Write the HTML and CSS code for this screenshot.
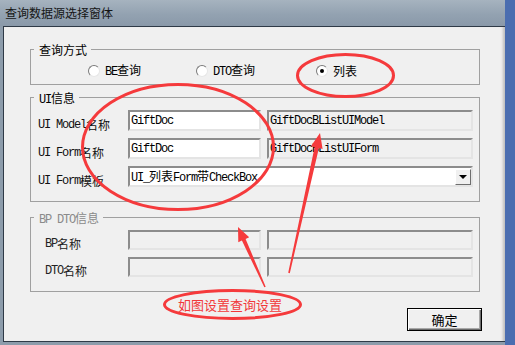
FILE: index.html
```html
<!DOCTYPE html>
<html lang="zh">
<head>
<meta charset="utf-8">
<title>查询数据源选择窗体</title>
<link rel="stylesheet" href="styles.css">
</head>
<body>
<div class="screen">
  <div class="window">
    <div class="titlebar">查询数据源选择窗体</div>
    <div class="frame">
      <div class="panel">
        <fieldset class="group g1">
          <legend>查询方式</legend>
          <div class="radios">
            <label class="radio r1"><span class="dot"></span><span><span class="m">BE</span>查询</span></label>
            <label class="radio r2"><span class="dot"></span><span><span class="m">DTO</span>查询</span></label>
            <label class="radio"><span class="dot on"></span><span>列表</span></label>
          </div>
        </fieldset>

        <fieldset class="group g2">
          <legend><span class="m">UI</span>信息</legend>
          <div class="grid g2grid">
            <div class="lbl"><span class="m">UI Model</span>名称</div>
            <div class="box"><span class="m">GiftDoc</span></div>
            <div class="box ro"><span class="m">GiftDocBListUIModel</span></div>

            <div class="lbl"><span class="m">UI Form</span>名称</div>
            <div class="box"><span class="m">GiftDoc</span></div>
            <div class="box ro"><span class="m">GiftDocBListUIForm</span></div>

            <div class="lbl"><span class="m">UI Form</span>模板</div>
            <div class="box combo"><span><span class="m">UI_</span>列表<span class="m">Form</span>带<span class="m">CheckBox</span></span><span class="drop"><span class="tri"></span></span></div>
          </div>
        </fieldset>

        <fieldset class="group g3">
          <legend class="dim"><span class="m">BP DTO</span>信息</legend>
          <div class="grid g3grid">
            <div class="lbl"><span class="m">BP</span>名称</div>
            <div class="box ro"></div>
            <div class="box ro"></div>

            <div class="lbl"><span class="m">DTO</span>名称</div>
            <div class="box ro"></div>
            <div class="box ro"></div>
          </div>
        </fieldset>

        <div class="actions">
          <button class="btn" type="button">确定</button>
        </div>
      </div>
    </div>
  </div>
  <div class="desk"></div>
</div>

<svg class="marks" width="515" height="345" viewBox="0 0 515 345">
  <g fill="none" stroke="#f53a3c" stroke-width="3">
    <ellipse cx="345.5" cy="75.5" rx="48" ry="21"/>
    <ellipse cx="178" cy="147" rx="95.5" ry="62.5"/>
    <ellipse cx="232.5" cy="304.5" rx="68" ry="14"/>
  </g>
  <g fill="#f53a3c">
    <polygon points="288.2,272.8 314.6,147.2 310.9,146.3 320,133 322.6,148.9 318.9,148.1 289.8,273.2"/>
    <polygon points="264.3,287.3 241.9,240.6 238.3,242.2 238,227 249.2,237.3 245.6,238.9 265.7,286.7"/>
  </g>
</svg>
<div class="note">如图设置查询设置</div>
</body>
</html>
```

FILE: styles.css
```css
* { box-sizing: border-box; }

body {
  margin: 0;
  width: 515px;
  height: 345px;
  overflow: hidden;
  position: relative;
  font-family: "Noto Sans CJK SC", sans-serif;
  font-size: 12px;
  color: #000;
}

.m {
  font-family: "Liberation Mono", monospace;
  font-size: 12px;
  letter-spacing: -1.2px;
}

.screen {
  display: flex;
  height: 345px;
}

.window {
  width: 505px;
  flex: none;
  display: flex;
  flex-direction: column;
  background: #8d9cab;
}

.desk {
  flex: 1;
  background: #4a6db0;
}

.titlebar {
  height: 26px;
  display: flex;
  align-items: center;
  padding-left: 5px;
  line-height: 14px;
  color: #151515;
  background: linear-gradient(180deg, #a6b3bf 0%, #93a2b1 55%, #8a99a9 100%);
}

.frame {
  flex: 1;
  display: flex;
  padding: 0 0 3px 3px;
}

.panel {
  flex: 1;
  min-width: 0;
  display: flex;
  flex-direction: column;
  background: #f0f0f0;
  border: 1px solid #2f3a47;
  border-right: none;
  box-shadow: inset -4px 0 3px -2px #bcbcbc;
  padding: 0 23px 0 26px;
}

.group {
  margin: 0 2px 0 0;
  min-width: 0;
  border: 1px solid #a0a0a0;
  padding: 0 6px 0 3px;
}

.group legend {
  padding: 0 4px 0 5px;
  height: 13px;
  line-height: 13px;
  font-size: 12px;
}

.group legend.dim { color: #8a8a8a; }

.g1 { margin-top: 16px; padding-top: 8px; padding-bottom: 6px; }
.g2 { margin-top: 6px; padding-top: 6px; padding-bottom: 14px; }
.g3 { margin-top: 9px; padding-top: 6px; padding-bottom: 14px; }

.radios {
  display: flex;
  height: 14px;
  align-items: center;
  padding-left: 54px;
}

.radio {
  display: flex;
  align-items: center;
  gap: 5px;
  line-height: 12px;
}
.r1 { width: 108px; }
.r2 { width: 120px; }

.dot {
  width: 12px;
  height: 12px;
  border-radius: 50%;
  background: #fff;
  border: 1px solid;
  border-color: #7a7a7a #e6e6e6 #e6e6e6 #7a7a7a;
  display: flex;
  align-items: center;
  justify-content: center;
}
.dot.on::after {
  content: "";
  width: 4px;
  height: 4px;
  border-radius: 50%;
  background: #000;
}

.grid {
  display: grid;
  grid-template-columns: 84px 133px 206px;
  column-gap: 6px;
  margin-left: 4px;
}
.g2grid { grid-auto-rows: 21px; row-gap: 7px; }
.g3grid { grid-auto-rows: 20px; row-gap: 7px; }

.lbl {
  display: flex;
  align-items: flex-end;
  line-height: 12px;
  white-space: nowrap;
  color: #111;
}
.g3grid .lbl { padding-left: 7px; color: #222; }

.box {
  display: flex;
  align-items: center;
  padding-left: 1px;
  background: #fff;
  border: 2px solid;
  border-color: #8c8c8c #e4e4e4 #e4e4e4 #8c8c8c;
  line-height: 12px;
  white-space: nowrap;
  overflow: hidden;
}
.box.ro { background: #f0f0f0; }

.combo {
  grid-column: 2 / 4;
  justify-content: space-between;
}

.drop {
  width: 16px;
  height: 16px;
  background: #f0f0f0;
  border: 1px solid;
  border-color: #ffffff #6e6e6e #6e6e6e #ffffff;
  display: flex;
  align-items: center;
  justify-content: center;
}
.tri {
  width: 0;
  height: 0;
  border-left: 4px solid transparent;
  border-right: 4px solid transparent;
  border-top: 4px solid #000;
}

.actions {
  display: flex;
  justify-content: flex-end;
  margin-top: 16px;
}

.btn {
  width: 75px;
  height: 23px;
  margin: 0;
  padding: 0;
  font-family: "Noto Sans CJK SC", sans-serif;
  font-size: 13px;
  line-height: 15px;
  color: #000;
  background: #f0f0f0;
  border: 1px solid #000;
  box-shadow: inset 1px 1px 0 #ffffff, inset -1px -1px 0 #6a6a6a, inset -2px -2px 0 #a8a8a8;
}

.marks {
  position: absolute;
  left: 0;
  top: 0;
  pointer-events: none;
}

.note {
  position: absolute;
  left: 178px;
  top: 297px;
  font-size: 13px;
  line-height: 16px;
  color: #f2383a;
  white-space: nowrap;
}
```
